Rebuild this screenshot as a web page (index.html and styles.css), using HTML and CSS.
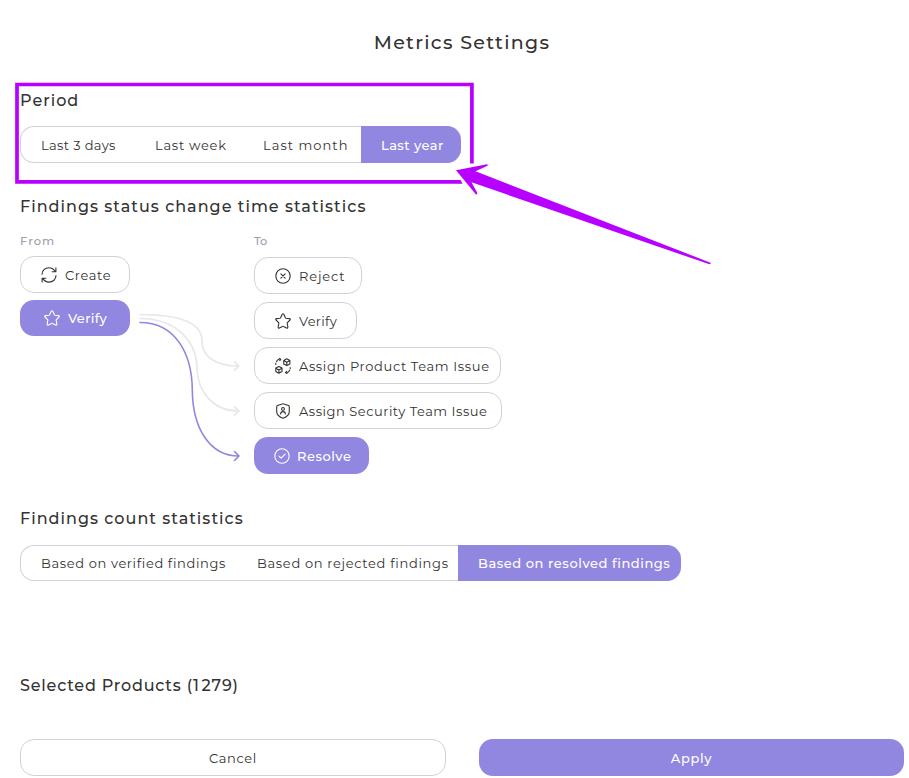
FILE: index.html
```
<!DOCTYPE html>
<html lang="en">
<head>
<meta charset="utf-8">
<title>Metrics Settings</title>
<link rel="stylesheet" href="styles.css">
</head>
<body>
<svg class="defs" width="0" height="0" aria-hidden="true">
  <symbol id="star" viewBox="0 0 16 16"><path d="M7.2 1.3q.8-1.2 1.6 0l1.5 3.3q.2.5.8.6l3.3.4q1.5.3.6 1.4l-2.6 2.6q-.3.4-.2.9l.7 3.6q0 1.4-1.3.9L8.500 13.400q-.5-.3-1 0L4.400 15q-1.300.5-1.300-.9l.7-3.600q.1-.5-.2-.9L1 7q-.9-1.100.6-1.400l3.300-.4q.6-.1.8-.6z"/></symbol>
</svg>
<main class="settings">
  <h1 class="title">Metrics Settings</h1>

  <section class="period">
    <h2 class="heading heading--period">Period</h2>
    <div class="segments segments--period">
      <button class="segment t-days">Last 3 days</button>
      <button class="segment t-week">Last week</button>
      <button class="segment t-month">Last month</button>
      <button class="segment segment--active t-year">Last year</button>
    </div>
  </section>

  <section class="status">
    <h2 class="heading">Findings status change time statistics</h2>
    <div class="flow">
      <div class="flow-from">
        <span class="label">From</span>
        <button class="pill">
          <svg class="icon" viewBox="0 0 16 16"><path d="M1 7.200C1 3.500 4 .8 7.900.8c2.800 0 4.900 1.300 6.300 3.800M14.900.9v3.900h-3.800M15 8.500c0 3.800-3.200 6.600-7 6.600-2.700 0-4.800-1.300-6.200-3.700M1.100 15v-3.800h3.800"/></svg>
          <span>Create</span>
        </button>
        <button class="pill pill--active">
          <svg class="icon"><use href="#star"/></svg>
          <span class="t-verify">Verify</span>
        </button>
      </div>
      <svg class="links" viewBox="130 300 124 174">
        <g class="link"><path d="M140 314.500C180 314.500 202 323 202 341C202 357 216 366 238.500 366M234.500 361.800L239 366L234.500 370.200"/><path d="M140 318.500C178 318.500 196.500 343 197 368C197.500 393 214 411 238.500 411M234.500 406.800L239 411L234.500 415.200"/></g>
        <path class="link link--active" d="M140 322.500C175 322.500 192 353 192.300 390C192.600 430 211 456 238.500 456M234.500 451.500L239 456L234.500 460.500"/>
      </svg>
      <div class="flow-to">
        <span class="label label--to">To</span>
        <button class="pill pill--reject">
          <svg class="icon" viewBox="0 0 16 16"><circle cx="8" cy="8" r="7.200"/><path d="M5.900 5.900l4.200 4.200M10.100 5.900l-4.200 4.200"/></svg>
          <span class="t-reject">Reject</span>
        </button>
        <button class="pill pill--verify">
          <svg class="icon"><use href="#star"/></svg>
          <span class="t-verify">Verify</span>
        </button>
        <button class="pill pill--product">
          <svg class="icon" viewBox="0 0 16 16"><path d="M11.800.8l3.100 1.600v3.500l-3.100 1.700-3.100-1.700V2.400zM8.700 2.500l3.100 1.700 3.100-1.700M11.800 4.200v3.300M3.900 8.500L7 10.100v3.500l-3.100 1.700-3.100-1.700v-3.500zM.8 10.200l3.100 1.700L7 10.200M3.900 11.900v3.300M.8 6.500V5.300M1.400 3.700Q2.300 1.800 4 1.300M4.300.4l1.500.8-1 1.400M15.200 9.500v1.200M14.700 12.200q-.9 2-2.700 2.500M11.700 13.300l-1.300 1.300 1.500.9"/></svg>
          <span>Assign Product Team Issue</span>
        </button>
        <button class="pill pill--security">
          <svg class="icon" viewBox="0 0 16 16"><path d="M8 .7q.5 0 5 1.600 1.300.5 1.300 1.700v4.500C14.300 12 11.500 14 8 15.300 4.500 14 1.700 12 1.700 8.500V4Q1.700 2.800 3 2.300 7.500.7 8 .7z"/><circle cx="8" cy="5.900" r="1.400"/><path d="M5.600 11q0-2.400 2.400-2.400T10.400 11"/></svg>
          <span class="t-security">Assign Security Team Issue</span>
        </button>
        <button class="pill pill--active pill--resolve">
          <svg class="icon" viewBox="0 0 16 16"><circle cx="8" cy="8" r="7.200"/><path d="M5 8.100l2.200 2.100 3.900-4"/></svg>
          <span class="t-resolve">Resolve</span>
        </button>
      </div>
    </div>
  </section>

  <section class="count">
    <h2 class="heading">Findings count statistics</h2>
    <div class="segments segments--count">
      <button class="segment">Based on verified findings</button>
      <button class="segment t-rejected">Based on rejected findings</button>
      <button class="segment segment--active t-resolved">Based on resolved findings</button>
    </div>
  </section>

  <h2 class="heading heading--products">Selected Products (1<span class="thousands">&nbsp;</span>279)</h2>

  <footer class="actions">
    <button class="action">Cancel</button>
    <button class="action action--primary">Apply</button>
  </footer>
</main>

<svg class="callout" viewBox="0 0 909 300" aria-hidden="true">
  <path class="callout-frame" d="M471.900 163.500V84.500H17V181.800H459.500"/>
  <path class="callout-frame-end" d="M459 180H460.500L462.500 183.700H459z"/>
  <path class="callout-arrow" d="M456 170.200L487 164.300Q488.500 165 487 166L475.500 171.300L710.500 262.700Q711 264 709.500 264.300L471.500 182.300L477.300 193Q477.500 194.500 476 194.500z"/>
</svg>
</body>
</html>
```
FILE: styles.css
```
* { box-sizing: border-box; }

body {
  margin: 0;
  background: #fff;
  color: #333;
  font-family: Montserrat, Inter, sans-serif;
  font-size: 13px;
}

.defs { position: absolute; }

.settings {
  display: flex;
  flex-direction: column;
  height: 778px;
  padding: 33px 5px 0 20px;
}

.title {
  margin: 0 0 38px;
  font-size: 19px;
  font-weight: 500;
  line-height: 20px;
  letter-spacing: 1.29px;
  text-align: center;
}

.heading {
  margin: 0 0 16px;
  font-size: 16px;
  font-weight: 500;
  line-height: 20px;
  letter-spacing: 1.02px;
}
.heading--period { margin-bottom: 15px; }
.heading--products { margin: 95px 0 43px; letter-spacing: .8px; }
.thousands { letter-spacing: -2.500px; }

button {
  margin: 0;
  padding: 0;
  border: 1px solid #d1d1db;
  background: #fff;
  color: #333;
  font: inherit;
  letter-spacing: .63px;
  white-space: nowrap;
}

.segments { display: grid; }
.segments--period { grid-template-columns: 115px 108px 118px 100px; width: 441px; height: 37px; }
.segments--count { grid-template-columns: 217px 221px 223px; width: 661px; height: 36px; }

.segment { border-width: 1px 0; padding-left: 20px; text-align: left; }
.segment:first-child { border-left-width: 1px; border-radius: 14px 0 0 14px; }
.segment:last-child { border-radius: 0 14px 14px 0; }
.segment--active { border-color: #9187e1; background: #9187e1; color: #fff; font-weight: 500; }

.status { margin-top: 34px; }
.flow { display: grid; grid-template-columns: 110px 124px 1fr; }
.flow-from, .flow-to { display: flex; flex-direction: column; align-items: flex-start; }
.flow-from { gap: 7px; }
.flow-to { gap: 8px; }

.label {
  height: 16px;
  color: #9d9dab;
  font-size: 11.500px;
  font-weight: 500;
  line-height: 16px;
  letter-spacing: 1px;
}
.label--to { letter-spacing: 0; }

.pill {
  display: flex;
  align-items: center;
  gap: 8px;
  width: 110px;
  height: 37px;
  padding-left: 20px;
  border-radius: 14px;
}
.pill--active { border: 0; background: #9187e1; color: #fff; font-weight: 500; }
.flow-from .pill--active { height: 36px; padding-left: 24px; }
.pill--reject { width: 108px; }
.pill--verify { width: 103px; }
.pill--product { width: 247px; }
.pill--security { width: 248px; }
.pill--resolve { width: 115px; gap: 7px; }

.icon {
  flex: none;
  width: 16px;
  height: 16px;
  fill: none;
  stroke: currentColor;
  stroke-width: 1.100;
  stroke-linecap: round;
  stroke-linejoin: round;
}

.links { width: 124px; height: 174px; margin-top: 67px; fill: none; stroke-width: 1.600; stroke-linecap: round; stroke-linejoin: round; }
.link { stroke: #e6e6eb; }
.link--active { stroke: #9187e1; }

.count { margin-top: 35px; }

.actions { display: grid; grid-template-columns: 426px 425px; gap: 33px; }
.action { height: 37px; border-radius: 14px; }
.action--primary { border: 0; background: #9187e1; color: #fff; font-weight: 500; }

.t-days { letter-spacing: .37px; }
.t-week { letter-spacing: .74px; }
.t-month { letter-spacing: 1.030px; }
.t-year { letter-spacing: .43px; }
.t-verify { letter-spacing: .32px; }
.t-reject { letter-spacing: .87px; }
.t-security { letter-spacing: .53px; }
.t-resolve { letter-spacing: .51px; }
.t-rejected { letter-spacing: .68px; }
.t-resolved { letter-spacing: .56px; }

.callout { position: absolute; top: 0; left: 0; width: 909px; height: 300px; pointer-events: none; }
.callout-frame { fill: none; stroke: #b700ff; stroke-width: 3.700; }
.callout-frame-end, .callout-arrow { fill: #b700ff; }
```
